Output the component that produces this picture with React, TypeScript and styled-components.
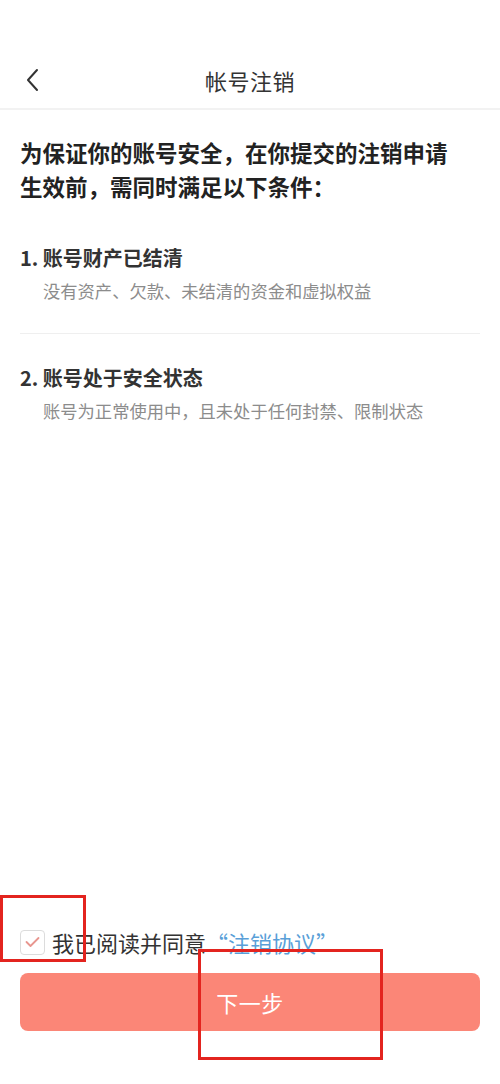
import React, { FC, useState } from "react";
import styled, { createGlobalStyle } from "styled-components";

const GlobalStyle = createGlobalStyle`
  html, body {
    margin: 0;
    padding: 0;
    background: #fff;
  }
  body {
    font-family: "Noto Sans CJK SC", "Noto Sans", sans-serif;
  }
`;

const Page = styled.div`
  position: relative;
  width: 500px;
  min-height: 1084px;
  display: flex;
  flex-direction: column;
  background: #fff;
  box-sizing: border-box;
`;

const StatusBar = styled.div`
  height: 52px;
`;

const NavBar = styled.div`
  position: relative;
  height: 56px;
  display: flex;
  align-items: center;
  justify-content: center;
  border-bottom: 2px solid #f2f2f2;
`;

const BackButton = styled.button`
  position: absolute;
  left: 20px;
  top: 50%;
  transform: translateY(-50%);
  width: 24px;
  height: 32px;
  padding: 0;
  border: none;
  background: none;
  display: flex;
  align-items: center;
  justify-content: center;
  cursor: pointer;
`;

const Title = styled.h1`
  margin: 0;
  font-size: 22px;
  font-weight: 400;
  color: #333;
  letter-spacing: 0.5px;
`;

const Content = styled.div`
  padding: 25px 20px 0;
  display: flex;
  flex-direction: column;
`;

const Heading = styled.p`
  margin: 0 0 11px;
  max-width: 440px;
  font-size: 22.5px;
  line-height: 34px;
  font-weight: 700;
  color: #222;
`;

const Condition = styled.div<{ last?: boolean }>`
  padding: 31px 0 30px;
  border-bottom: ${({ last }) => (last ? "none" : "1px solid #efefef")};
`;

const ConditionTitle = styled.div`
  font-size: 20px;
  line-height: 26px;
  font-weight: 700;
  color: #333;
`;

const ConditionDesc = styled.div`
  margin-top: 8px;
  padding-left: 23px;
  font-size: 17.3px;
  line-height: 24px;
  color: #8c8c8c;
`;

const Spacer = styled.div`
  flex: 1;
`;

const Footer = styled.div`
  padding: 0 20px 53px;
  display: flex;
  flex-direction: column;
  gap: 18px;
`;

const Agreement = styled.label`
  display: flex;
  align-items: center;
  gap: 7px;
  font-size: 22px;
  line-height: 26px;
  color: #333;
  cursor: pointer;
`;

const CheckBox = styled.span`
  width: 25px;
  height: 25px;
  box-sizing: border-box;
  border: 1.5px solid #dcdcdc;
  border-radius: 4px;
  display: flex;
  align-items: center;
  justify-content: center;
  background: #fff;
`;

const Link = styled.span`
  color: #5a9fd8;
`;

const NextButton = styled.button<{ active: boolean }>`
  height: 58px;
  border: none;
  border-radius: 8px;
  background: ${({ active }) => (active ? "#fb8677" : "#f7b3aa")};
  color: #fff;
  font-family: "Noto Sans CJK SC", "Noto Sans", sans-serif;
  font-size: 22px;
  letter-spacing: 0.5px;
  cursor: pointer;
`;

const Marker = styled.div<{ left: number; top: number; w: number; h: number }>`
  position: absolute;
  left: ${({ left }) => left}px;
  top: ${({ top }) => top}px;
  width: ${({ w }) => w}px;
  height: ${({ h }) => h}px;
  box-sizing: border-box;
  border: 3px solid #e3241f;
  pointer-events: none;
`;

const conditions = [
  {
    title: "1. 账号财产已结清",
    desc: "没有资产、欠款、未结清的资金和虚拟权益",
  },
  {
    title: "2. 账号处于安全状态",
    desc: "账号为正常使用中，且未处于任何封禁、限制状态",
  },
];

const App: FC = () => {
  const [agreed, setAgreed] = useState(true);

  return (
    <>
      <GlobalStyle />
      <Page>
        <StatusBar />
        <NavBar>
          <BackButton aria-label="返回">
            <svg width="14" height="24" viewBox="0 0 14 24" fill="none">
              <path
                d="M12 2 L3 12 L12 22"
                stroke="#333"
                strokeWidth="2"
                strokeLinecap="round"
                strokeLinejoin="round"
              />
            </svg>
          </BackButton>
          <Title>帐号注销</Title>
        </NavBar>

        <Content>
          <Heading>为保证你的账号安全，在你提交的注销申请生效前，需同时满足以下条件：</Heading>
          {conditions.map((item, i) => (
            <Condition key={item.title} last={i === conditions.length - 1}>
              <ConditionTitle>{item.title}</ConditionTitle>
              <ConditionDesc>{item.desc}</ConditionDesc>
            </Condition>
          ))}
        </Content>

        <Spacer />

        <Footer>
          <Agreement onClick={() => setAgreed((prev) => !prev)}>
            <CheckBox>
              {agreed && (
                <svg width="15" height="12" viewBox="0 0 15 12" fill="none">
                  <path
                    d="M1.5 6 L5.5 10 L13.5 2"
                    stroke="#e8968f"
                    strokeWidth="1.8"
                    strokeLinecap="round"
                    strokeLinejoin="round"
                  />
                </svg>
              )}
            </CheckBox>
            <span>
              我已阅读并同意<Link>“注销协议”</Link>
            </span>
          </Agreement>
          <NextButton active={agreed}>下一步</NextButton>
        </Footer>

        <Marker left={0} top={895} w={86} h={67} />
        <Marker left={198} top={949} w={185} h={111} />
      </Page>
    </>
  );
};

export default App;
